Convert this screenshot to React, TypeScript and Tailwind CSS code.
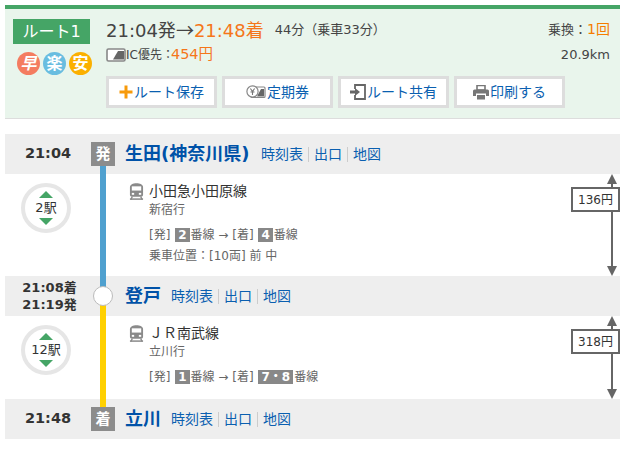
const FONT = "font-['DejaVu_Sans','Noto_Sans_CJK_JP',sans-serif]";

function Triangle({ down = false }: { down?: boolean }) {
  return (
    <svg width="14" height="7" viewBox="0 0 14 7" className="block">
      <path d={down ? 'M0 0H14L7 7Z' : 'M7 0L14 7H0Z'} fill="#45a566" />
    </svg>
  );
}

function TrainIcon() {
  return (
    <svg width="15" height="19" viewBox="0 0 16 19" className="block shrink-0">
      <path d="M3.5 1.5 C5 0.4 11 0.4 12.5 1.5 C14.3 2.3 15 3.5 15 5 V13 C15 14.4 14 15 12.8 15 H3.2 C2 15 1 14.4 1 13 V5 C1 3.5 1.7 2.3 3.5 1.5 Z" fill="#8a8a8a" />
      <rect x="3" y="4" width="10" height="4.5" fill="#fff" />
      <rect x="3" y="11" width="2.5" height="2" fill="#fff" />
      <rect x="10.5" y="11" width="2.5" height="2" fill="#fff" />
      <path d="M1 17.6H15" stroke="#8a8a8a" strokeWidth="1.6" />
      <path d="M3.5 15L2 18M12.5 15L14 18" stroke="#8a8a8a" strokeWidth="1.4" />
    </svg>
  );
}

function CardIcon() {
  return (
    <svg width="20" height="14" viewBox="0 0 20 14" className="block shrink-0">
      <rect x="1" y="1" width="18" height="12" rx="1.5" fill="#fff" stroke="#888" strokeWidth="1.6" />
      <path d="M7 11.5 L12 3 H18 V11.5 Z" fill="#666" />
    </svg>
  );
}

function PlusIcon() {
  return (
    <svg width="14" height="14" viewBox="0 0 14 14" className="block shrink-0">
      <path d="M7 0.5V13.5M0.5 7H13.5" stroke="#f79a0a" strokeWidth="3" />
    </svg>
  );
}

function PassIcon() {
  return (
    <svg width="20" height="14" viewBox="0 0 20 14" className="block shrink-0">
      <rect x="5" y="2" width="14" height="10.5" rx="1" fill="#fff" stroke="#888" strokeWidth="1.2" />
      <path d="M11 11.5 L15 4 H18 V11.5 Z" fill="#666" />
      <circle cx="6.5" cy="6.5" r="5.6" fill="#fff" stroke="#888" strokeWidth="1.2" />
      <path d="M4.4 3.5L6.5 6.5L8.6 3.5M6.5 6.5V10M4.5 7H8.5" stroke="#777" strokeWidth="1.1" fill="none" />
    </svg>
  );
}

function ShareIcon() {
  return (
    <svg width="16" height="16" viewBox="0 0 16 16" className="block shrink-0">
      <path d="M5 5V1H15V15H5V11" fill="none" stroke="#666" strokeWidth="1.8" />
      <path d="M0 6.5H5V4L10 8L5 12V9.5H0Z" fill="#666" />
    </svg>
  );
}

function PrintIcon() {
  return (
    <svg width="16" height="15" viewBox="0 0 16 15" className="block shrink-0">
      <path d="M4 0.5H12V5H4Z" fill="none" stroke="#777" strokeWidth="1.6" />
      <path d="M1.5 4.5H14.5A1.5 1.5 0 0 1 16 6V11H13V8.5H3V11H0V6A1.5 1.5 0 0 1 1.5 4.5Z" fill="#777" />
      <rect x="4" y="10" width="8" height="4.5" fill="#777" />
    </svg>
  );
}

function ActionButton({ icon, label }: { icon: React.ReactNode; label: string }) {
  return (
    <div className="flex h-8 w-[111px] items-center justify-center gap-px border-[3px] border-[#ddd] bg-white text-sm text-[#0a5fb0]">
      {icon}
      <span>{label}</span>
    </div>
  );
}

function Badge({ char, color, italic = false }: { char: string; color: string; italic?: boolean }) {
  return (
    <div
      className={`flex h-[23px] w-[23px] items-center justify-center rounded-full text-[16px] leading-none font-bold text-white ${color} ${italic ? 'italic' : ''}`}
    >
      {char}
    </div>
  );
}

function StopLinks() {
  return (
    <div className="flex items-center text-sm text-[#0a5fb0]">
      <span>時刻表</span>
      <span className="mx-[5px] h-[15px] w-px bg-[#ccc]" />
      <span>出口</span>
      <span className="mx-[5px] h-[15px] w-px bg-[#ccc]" />
      <span>地図</span>
    </div>
  );
}

function StationRow({
  time,
  mark,
  name,
  nameWidth,
}: {
  time: React.ReactNode;
  mark: React.ReactNode;
  name: string;
  nameWidth: string;
}) {
  return (
    <div className="flex h-10 items-center bg-[#eee]">
      <div className="w-[86px] text-center text-[14.5px] font-bold text-[#333]">{time}</div>
      <div className="relative z-20 flex w-6 justify-center">{mark}</div>
      <div className={`ml-[10px] text-lg font-bold whitespace-nowrap text-[#0052a8] ${nameWidth}`}>{name}</div>
      <StopLinks />
    </div>
  );
}

function MarkBox({ char }: { char: string }) {
  return (
    <div className="flex h-6 w-6 items-center justify-center bg-[#8c8c8c] text-[15px] font-bold text-white">{char}</div>
  );
}

function Track({ value }: { value: string }) {
  return <span className="mx-px bg-[#888] px-[3px] font-bold text-white">{value}</span>;
}

function Section({
  height,
  lineColor,
  lineOffset,
  stops,
  line,
  dest,
  tracks,
  extra,
  fare,
}: {
  height: string;
  lineColor: string;
  lineOffset: string;
  stops: string;
  line: string;
  dest: string;
  tracks: [string, string];
  extra?: string;
  fare: string;
}) {
  return (
    <div className={`relative flex ${height}`}>
      <div className="w-[86px] shrink-0 pt-[9px]">
        <div className="ml-4 flex h-[50px] w-[50px] flex-col items-center justify-center rounded-full border-4 border-[#e6e6e6]">
          <Triangle />
          <div className="my-px text-[13px] leading-[18px] text-[#333]">{stops}</div>
          <Triangle down />
        </div>
      </div>
      <div className={`relative z-10 ml-[9px] w-1.5 shrink-0 ${lineOffset} ${lineColor}`} />
      <div className="ml-[23px] flex-1 pt-2">
        <div className="flex gap-[5px]">
          <TrainIcon />
          <div>
            <div className="text-sm leading-[19px] text-[#333]">{line}</div>
            <div className="text-xs leading-[19px] text-[#666]">{dest}</div>
            <div className="mt-[5px] text-xs leading-[21px] text-[#666]">
              [発] <Track value={tracks[0]} />番線 → [着] <Track value={tracks[1]} />番線
            </div>
            {extra && <div className="text-xs leading-[21px] text-[#666]">{extra}</div>}
          </div>
        </div>
      </div>
      <div className="relative mr-px flex w-[14px] shrink-0 flex-col items-center">
        <svg width="10" height="10" viewBox="0 0 10 10" className="block shrink-0">
          <path d="M5 0L10 10H0Z" fill="#666" />
        </svg>
        <div className="w-0.5 flex-1 bg-[#666]" />
        <svg width="10" height="10" viewBox="0 0 10 10" className="block shrink-0">
          <path d="M5 10L10 0H0Z" fill="#666" />
        </svg>
        <div className="absolute top-[13px] right-[-1px] flex h-[25px] w-[49px] items-center justify-center border-2 border-[#666] bg-white text-xs text-[#333]">
          {fare}
        </div>
      </div>
    </div>
  );
}

export default function App() {
  return (
    <div className={`h-[452px] w-[629px] bg-white px-[5px] pt-[5px] ${FONT}`}>
      <div className="w-[615px]">
        {/* ルート概要 */}
        <div className="flex h-[114px] border-t-4 border-b border-t-[#45a566] border-b-[#ddd] bg-[#e9f5ec]">
          <div className="w-[101px] shrink-0 pt-[10px] pl-2">
            <div className="flex h-[25px] w-[77px] items-center justify-center bg-[#45a566] text-base text-white">
              ルート1
            </div>
            <div className="mt-2 ml-1 flex gap-[3px]">
              <Badge char="早" color="bg-[#f47c60]" italic />
              <Badge char="楽" color="bg-[#69bde0]" />
              <Badge char="安" color="bg-[#fbb000]" />
            </div>
          </div>
          <div className="flex-1">
            <div className="flex h-[33px] items-center pt-2 pr-[10px]">
              <span className="text-lg text-[#444]">
                21:04発<span className="font-['Noto_Sans_CJK_JP']">→</span>
                <span className="text-[#f5761a]">21:48着</span>
              </span>
              <span className="ml-[11px] text-[13px] text-[#444]">44分（乗車33分）</span>
              <span className="ml-auto text-[13px] text-[#444]">
                乗換：<span className="text-sm text-[#f57c00]">1回</span>
              </span>
            </div>
            <div className="flex h-[26px] items-center pr-[10px] text-xs text-[#444]">
              <CardIcon />
              <span>IC優先：</span>
              <span className="-ml-[3px] text-[14.5px] text-[#f5761a]">454円</span>
              <span className="ml-auto text-[13px]">20.9km</span>
            </div>
            <div className="mt-2 flex gap-[5px]">
              <ActionButton icon={<PlusIcon />} label="ルート保存" />
              <ActionButton icon={<PassIcon />} label="定期券" />
              <ActionButton icon={<ShareIcon />} label="ルート共有" />
              <ActionButton icon={<PrintIcon />} label="印刷する" />
            </div>
          </div>
        </div>

        {/* 経路 */}
        <div className="mt-[15px]">
          <StationRow time="21:04" mark={<MarkBox char="発" />} name="生田(神奈川県)" nameWidth="w-[136px]" />
          <Section
            height="h-[102px]"
            lineColor="bg-[#4fa0cf]"
            lineOffset="-mt-2 -mb-[14px]"
            stops="2駅"
            line="小田急小田原線"
            dest="新宿行"
            tracks={['2', '4']}
            extra="乗車位置：[10両] 前 中"
            fare="136円"
          />
          <StationRow
            time={
              <div className="pl-[3px] text-[13px] leading-[17px]">
                21:08着
                <br />
                21:19発
              </div>
            }
            mark={<div className="h-5 w-5 rounded-full border border-[#bbb] bg-white" />}
            name="登戸"
            nameWidth="w-[46px]"
          />
          <Section
            height="h-[83px]"
            lineColor="bg-[#ffd000]"
            lineOffset="-mt-[14px] -mb-2"
            stops="12駅"
            line="ＪＲ南武線"
            dest="立川行"
            tracks={['1', '7・8']}
            fare="318円"
          />
          <StationRow time="21:48" mark={<MarkBox char="着" />} name="立川" nameWidth="w-[46px]" />
        </div>
      </div>
    </div>
  );
}
